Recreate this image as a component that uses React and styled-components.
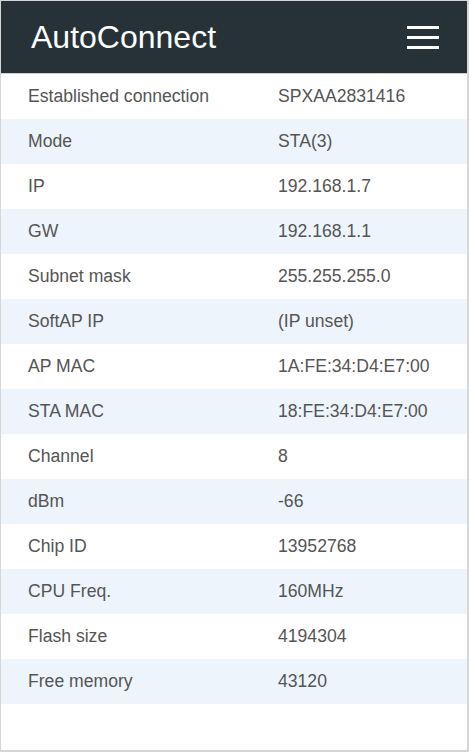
import React from 'react';
import styled, { createGlobalStyle } from 'styled-components';

const GlobalStyle = createGlobalStyle`
  html, body {
    margin: 0;
    padding: 0;
    background: #ffffff;
  }
  body {
    font-family: 'Liberation Sans', Arial, sans-serif;
  }
`;

const Page = styled.div`
  box-sizing: border-box;
  width: 469px;
  height: 752px;
  border: 1px solid #d6d6d6;
  border-right-width: 2px;
  border-bottom-width: 2px;
  display: flex;
  flex-direction: column;
  background: #ffffff;
`;

const Header = styled.header`
  height: 72px;
  background-color: #263238;
  border-bottom: 1px solid #d0d0d0;
  display: flex;
  align-items: center;
  justify-content: space-between;
  padding: 0 28px 0 30px;
  flex-shrink: 0;
`;

const Title = styled.h1`
  margin: 0;
  font-size: 32px;
  font-weight: 400;
  color: #ffffff;
`;

const MenuButton = styled.button`
  background: none;
  border: none;
  padding: 0;
  width: 32px;
  height: 23px;
  display: flex;
  flex-direction: column;
  justify-content: space-between;
  cursor: pointer;
`;

const MenuBar = styled.span`
  display: block;
  height: 3px;
  background: #ffffff;
`;

const Table = styled.div`
  display: flex;
  flex-direction: column;
`;

const Row = styled.div`
  display: grid;
  grid-template-columns: 250px 1fr;
  height: 45px;
  align-items: center;
  padding-left: 27px;
  background-color: ${(p) => (p.striped ? '#edf4fc' : '#ffffff')};
  color: #555555;
  font-size: 17.6px;
`;

const rows = [
  ['Established connection', 'SPXAA2831416'],
  ['Mode', 'STA(3)'],
  ['IP', '192.168.1.7'],
  ['GW', '192.168.1.1'],
  ['Subnet mask', '255.255.255.0'],
  ['SoftAP IP', '(IP unset)'],
  ['AP MAC', '1A:FE:34:D4:E7:00'],
  ['STA MAC', '18:FE:34:D4:E7:00'],
  ['Channel', '8'],
  ['dBm', '-66'],
  ['Chip ID', '13952768'],
  ['CPU Freq.', '160MHz'],
  ['Flash size', '4194304'],
  ['Free memory', '43120'],
];

export default function App() {
  return (
    <>
      <GlobalStyle />
      <Page>
        <Header>
          <Title>AutoConnect</Title>
          <MenuButton aria-label="menu">
            <MenuBar />
            <MenuBar />
            <MenuBar />
          </MenuButton>
        </Header>
        <Table>
          {rows.map(([label, value], i) => (
            <Row key={label} striped={i % 2 === 1}>
              <span>{label}</span>
              <span>{value}</span>
            </Row>
          ))}
        </Table>
      </Page>
    </>
  );
}
